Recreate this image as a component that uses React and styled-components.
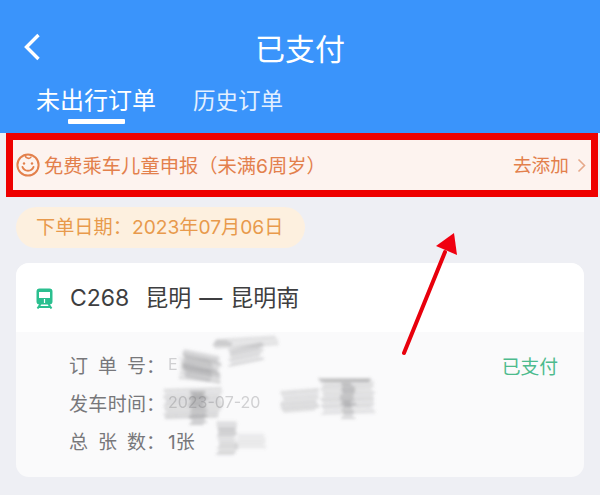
import React from "react";
import styled, { createGlobalStyle } from "styled-components";

const GlobalStyle = createGlobalStyle`
  html, body {
    margin: 0;
    padding: 0;
    background: #eeeff4;
  }
  * {
    box-sizing: border-box;
  }
`;

const Page = styled.div`
  position: relative;
  width: 600px;
  height: 495px;
  overflow: hidden;
  background: #eeeff4;
  font-family: Inter, "Noto Sans CJK SC", "Noto Sans", sans-serif;
`;

const Header = styled.header`
  height: 133px;
  padding: 30px 0 0 24px;
  background: #3a94fb;
  color: #fff;
`;

const TitleRow = styled.div`
  position: relative;
  display: flex;
  align-items: center;
  height: 38px;
`;

const Title = styled.h1`
  flex: 1;
  margin: 0 0 0 -24px;
  font-size: 30px;
  font-weight: 400;
  line-height: 38px;
  text-align: center;
`;

const BackIcon = styled.svg`
  position: absolute;
  left: -1px;
  top: 3px;
  width: 18px;
  height: 28px;
`;

const Tabs = styled.nav`
  display: flex;
  gap: 37px;
  margin: 15px 0 0 12px;
`;

const Tab = styled.div`
  position: relative;
  font-size: ${(p) => (p.$active ? 24 : 22.5)}px;
  font-weight: 400;
  line-height: 36px;
  color: ${(p) => (p.$active ? "#fff" : "#e4f0ff")};

  &::after {
    content: "";
    display: ${(p) => (p.$active ? "block" : "none")};
    position: absolute;
    left: 32px;
    top: 36px;
    width: 57px;
    height: 5px;
    border-radius: 1px;
    background: #fff;
  }
`;

const Notice = styled.section`
  display: flex;
  align-items: center;
  height: 64px;
  margin: 0 2px 0 6px;
  padding: 0 5px 0 3px;
  border: 7px solid #ee0000;
  background: #fdf3ef;
  color: #e3804c;
  font-size: 19.3px;
`;

const NoticeText = styled.span`
  margin-left: 4px;
  flex: 1;
  white-space: nowrap;
`;

const Action = styled.span`
  padding-bottom: 3px;
  font-size: 18.7px;
`;

const Smiley = styled.svg`
  width: 24px;
  height: 24px;
  flex: none;
`;

const Chevron = styled.svg`
  width: 9px;
  height: 15px;
  margin-left: 8px;
`;

const DatePill = styled.div`
  display: flex;
  align-items: center;
  width: 289px;
  height: 41px;
  margin: 10px 0 0 16px;
  padding: 0 0 4px 20px;
  border-radius: 21px;
  background: #fdf0df;
  color: #e89a4c;
  font-size: 19.2px;
  white-space: nowrap;
`;

const Card = styled.article`
  width: 568px;
  height: 214px;
  margin: 15px 0 0 16px;
  border-radius: 13px;
  overflow: hidden;
  background: #fafafb;
`;

const CardHead = styled.div`
  display: flex;
  align-items: center;
  height: 69px;
  padding: 0 0 0 20px;
  background: #fff;
  color: #3e3e40;
`;

const TrainIcon = styled.svg`
  width: 17px;
  height: 21px;
  margin: 2px 17px 0 0;
`;

const Route = styled.div`
  display: flex;
  align-items: baseline;
  gap: 8px;
  padding-bottom: 3px;
  font-size: 23px;
  white-space: nowrap;
`;

const TrainCode = styled.span`
  margin-right: 8px;
`;

const CardBody = styled.div`
  position: relative;
  padding: 18px 26px 0 53px;
  display: flex;
  justify-content: space-between;
`;

const InfoList = styled.div`
  display: flex;
  flex-direction: column;
  gap: 10px;
`;

const InfoRow = styled.div`
  display: flex;
  align-items: center;
  height: 28px;
  color: #77777a;
  font-size: 19px;
  white-space: nowrap;
`;

const Label = styled.span`
  display: flex;
  justify-content: space-between;
  width: 77px;
`;

const Colon = styled.span`
  width: 22px;
`;

const Faint = styled.span`
  color: #d0d0d2;
  font-size: 16px;
  filter: blur(0.6px);
`;

const Status = styled.div`
  padding-top: 4px;
  color: #4dbb8d;
  font-size: 18.8px;
  line-height: 28px;
`;

const Overlay = styled.svg`
  position: absolute;
  left: 0;
  top: 0;
  width: 600px;
  height: 495px;
  pointer-events: none;
`;

// areas scribbled out in the screenshot: x, y, width, height, slope, strength
const scribbles = [
  [182, 350, 40, 28, 0.2, 0.3],
  [178, 358, 36, 22, 0.1, 0.18],
  [212, 340, 68, 10, -0.06, 0.14],
  [228, 350, 36, 17, -0.2, 0.22],
  [212, 341, 20, 6, 0, 0.26],
  [163, 390, 60, 30, -0.03, 0.2],
  [188, 392, 20, 34, 0, 0.32],
  [280, 392, 40, 22, -0.08, 0.2],
  [320, 382, 56, 34, -0.03, 0.18],
  [340, 384, 16, 36, 0, 0.3],
  [318, 379, 54, 3, 0, 0.32],
  [216, 422, 22, 34, 0, 0.24],
  [234, 434, 34, 16, 0, 0.1],
];

const makeStreaks = () => {
  let seed = 7;
  const rnd = () => {
    seed = (seed * 9301 + 49297) % 233280;
    return seed / 233280;
  };
  const lines = [];
  scribbles.forEach(([x, y, w, h, slope, strength]) => {
    for (let yy = y; yy < y + h; yy += 2) {
      const from = x + rnd() * 4;
      const to = x + w - rnd() * 5;
      lines.push({
        d: `M${from} ${yy} L${to} ${yy + (to - from) * slope}`,
        o: strength * (0.6 + rnd() * 0.8),
      });
    }
  });
  return lines;
};

const streaks = makeStreaks();

const COLON = "\uFF1A";

const App = () => (
  <Page>
    <GlobalStyle />
    <Header>
      <TitleRow>
        <BackIcon viewBox="0 0 18 28">
          <path d="M15.5 2 L3.5 14 L15.5 26" fill="none" stroke="#fff" strokeWidth="3.4" />
        </BackIcon>
        <Title>已支付</Title>
      </TitleRow>
      <Tabs>
        <Tab $active>未出行订单</Tab>
        <Tab>历史订单</Tab>
      </Tabs>
    </Header>
    <Notice>
      <Smiley viewBox="0 0 24 24" fill="none" stroke="#e3804c" strokeWidth="2">
        <circle cx="12" cy="12" r="10.6" />
        <path d="M6.5 14 C8.5 19 15.5 19 17.5 14" strokeLinecap="round" />
        <path d="M9 2.5 C10 6 14 6 15 4" strokeWidth="1.6" strokeLinecap="round" />
        <circle cx="8" cy="10.5" r="1.2" fill="#e3804c" stroke="none" />
        <circle cx="16" cy="10.5" r="1.2" fill="#e3804c" stroke="none" />
      </Smiley>
      <NoticeText>{"免费乘车儿童申报\uFF08未满6周岁\uFF09"}</NoticeText>
      <Action>去添加</Action>
      <Chevron viewBox="0 0 9 15">
        <path d="M1.5 1.5 L7.5 7.5 L1.5 13.5" fill="none" stroke="#e6a98a" strokeWidth="1.6" />
      </Chevron>
    </Notice>
    <DatePill>{`下单日期${COLON}2023年07月06日`}</DatePill>
    <Card>
      <CardHead>
        <TrainIcon viewBox="0 0 17 21">
          <path
            d="M3.5 0.5 H13.5 A3 3 0 0 1 16.5 3.5 V13.5 A3 3 0 0 1 13.5 16.5 H3.5 A3 3 0 0 1 0.5 13.5 V3.5 A3 3 0 0 1 3.5 0.5 Z M3 4 V10 H14 V4 Z"
            fill="#2bbf8f"
            fillRule="evenodd"
          />
          <path d="M8.5 11 V15" stroke="#fff" strokeWidth="1.2" />
          <path d="M4.5 16 L1.5 20.5 M12.5 16 L15.5 20.5 M3 19 H14" stroke="#2bbf8f" strokeWidth="2" fill="none" />
        </TrainIcon>
        <Route>
          <TrainCode>C268</TrainCode>
          <span>昆明</span>
          <span>—</span>
          <span>昆明南</span>
        </Route>
      </CardHead>
      <CardBody>
        <InfoList>
          <InfoRow>
            <Label>
              <span>订</span>
              <span>单</span>
              <span>号</span>
            </Label>
            <Colon>{COLON}</Colon>
            <Faint>E</Faint>
          </InfoRow>
          <InfoRow>
            <Label>
              <span>发</span>
              <span>车</span>
              <span>时</span>
              <span>间</span>
            </Label>
            <Colon>{COLON}</Colon>
            <Faint>2023-07-20</Faint>
          </InfoRow>
          <InfoRow>
            <Label>
              <span>总</span>
              <span>张</span>
              <span>数</span>
            </Label>
            <Colon>{COLON}</Colon>
            <span>1张</span>
          </InfoRow>
        </InfoList>
        <Status>已支付</Status>
      </CardBody>
    </Card>
    <Overlay viewBox="0 0 600 495">
      <defs>
        <filter id="smudge" x="-10%" y="-10%" width="120%" height="120%">
          <feGaussianBlur stdDeviation="1.4" />
        </filter>
      </defs>
      <g filter="url(#smudge)">
        {streaks.map((s) => (
          <path key={s.d} d={s.d} stroke="#6f6f72" strokeWidth="2" opacity={s.o} />
        ))}
      </g>
      <path d="M404 353 L445 252" stroke="#e8000c" strokeWidth="4" strokeLinecap="round" />
      <path d="M454 233 L436 246 L457 255 Z" fill="#f00010" />
    </Overlay>
  </Page>
);

export default App;
